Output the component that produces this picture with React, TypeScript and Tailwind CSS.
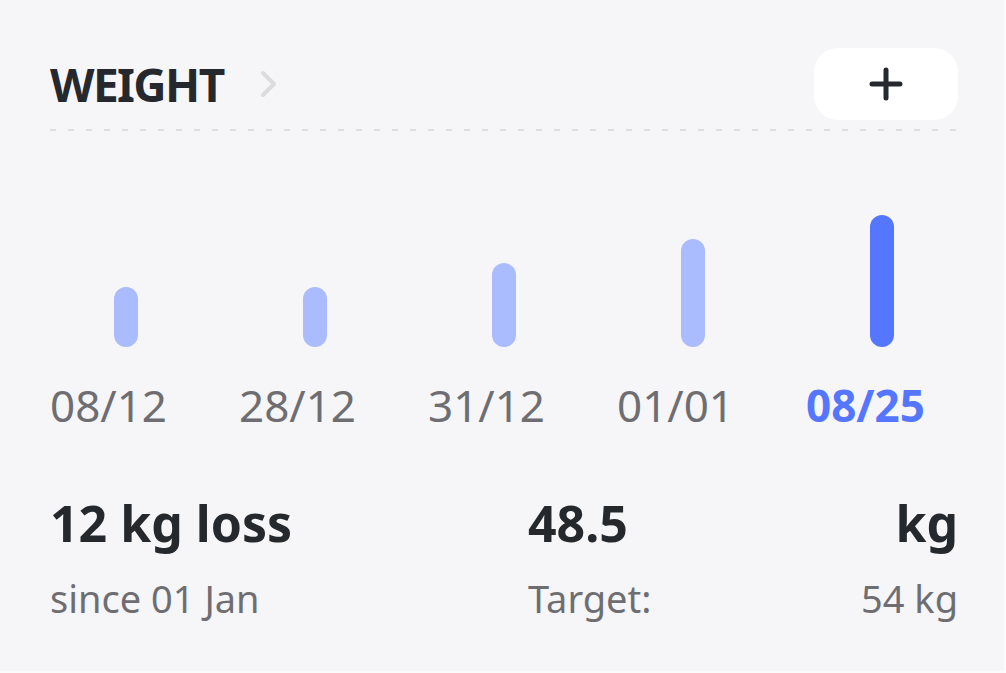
import React from 'react';

const bars = [
  { label: '08/12', height: 60, active: false },
  { label: '28/12', height: 60, active: false },
  { label: '31/12', height: 84, active: false },
  { label: '01/01', height: 108, active: false },
  { label: '08/25', height: 132, active: true },
];

const App = () => {
  return (
    <div
      className="w-full h-[673px] bg-[#f6f6f8] border-r-2 border-b-2 border-[#fbfbfc] px-[50px] pt-[48px] text-[#25282d]"
      style={{ fontFamily: '"Noto Sans", "Open Sans", sans-serif' }}
    >
      {/* Header */}
      <div className="w-[908px] flex items-center justify-between">
        <div className="flex items-center">
          <h2 className="text-[46px] leading-none font-bold tracking-[-1.6px]">WEIGHT</h2>
          <svg className="ml-[36px]" width="18" height="28" viewBox="0 0 18 28" fill="none">
            <path d="M3 3l11 11L3 25" stroke="#dcdcdf" strokeWidth="4" strokeLinecap="round" strokeLinejoin="round" />
          </svg>
        </div>
        <button className="w-[144px] h-[72px] rounded-[24px] bg-white flex items-center justify-center">
          <svg width="36" height="36" viewBox="0 0 36 36" fill="none">
            <path d="M18 4v28M4 18h28" stroke="#25282d" strokeWidth="5" strokeLinecap="round" />
          </svg>
        </button>
      </div>
      <div className="w-[908px] h-[2px] mt-[9px] bg-[repeating-linear-gradient(90deg,#dedee2_0_6px,transparent_6px_18px)]" />

      {/* Chart */}
      <div className="w-[908px] grid grid-cols-5 gap-[37px] mt-[84px]">
        {bars.map((bar) => (
          <div key={bar.label} className="flex flex-col">
            <div className="h-[132px] flex items-end justify-center">
              <div
                className={bar.active ? 'w-[24px] rounded-full bg-[#5576ff]' : 'w-[24px] rounded-full bg-[#aabbfe]'}
                style={{ height: bar.height }}
              />
            </div>
            <span
              className={
                bar.active
                  ? 'mt-[36px] text-[44px] leading-none font-bold text-[#5576ff]'
                  : 'mt-[36px] text-[44px] leading-none text-[#6e6e72]'
              }
            >
              {bar.label}
            </span>
          </div>
        ))}
      </div>

      {/* Summary */}
      <div className="w-[908px] grid grid-cols-2 gap-12 mt-[71px]">
        <div className="flex flex-col">
          <span className="text-[50px] leading-none font-bold">12 kg loss</span>
          <span className="mt-[31px] text-[38px] leading-none text-[#6e6e72]">since 01 Jan</span>
        </div>
        <div className="flex flex-col">
          <div className="flex justify-between">
            <span className="text-[50px] leading-none font-bold">48.5</span>
            <span className="text-[50px] leading-none font-bold">kg</span>
          </div>
          <div className="mt-[31px] flex justify-between text-[38px] leading-none text-[#6e6e72]">
            <span>Target:</span>
            <span>54 kg</span>
          </div>
        </div>
      </div>
    </div>
  );
};

export default App;
